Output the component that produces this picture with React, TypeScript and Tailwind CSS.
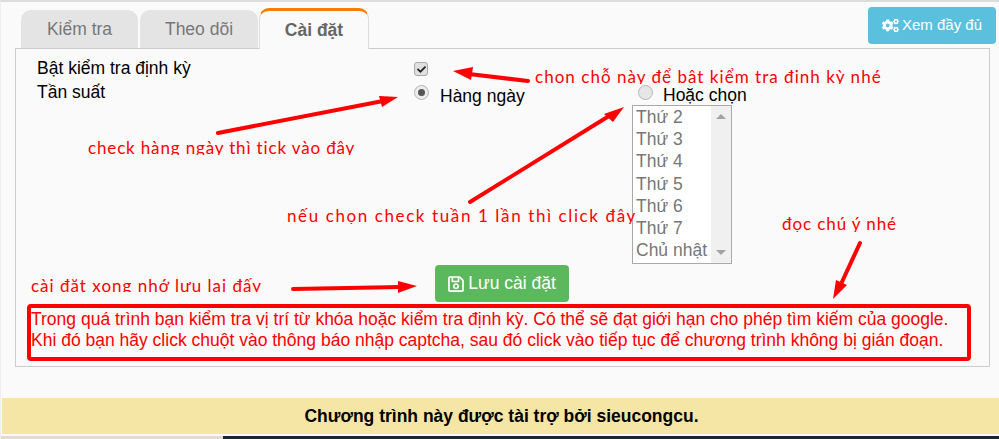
import { FaCheck, FaCogs, FaRegSave } from "react-icons/fa";

const days = ["Thứ 2", "Thứ 3", "Thứ 4", "Thứ 5", "Thứ 6", "Thứ 7", "Chủ nhật"];

function Arrows() {
  return (
    <svg className="absolute left-0 top-0" width="999" height="439" fill="#ff0000" stroke="none">
      <g stroke="#ff0000" strokeWidth="4" strokeLinecap="round">
        <line x1="527" y1="79" x2="468" y2="72" />
        <line x1="217" y1="131" x2="382" y2="99" />
        <line x1="469" y1="200" x2="608" y2="114" />
        <line x1="292" y1="287" x2="400" y2="285" />
        <line x1="859" y1="241" x2="840" y2="282" />
      </g>
      <polygon points="452,69 472,65 470,78" />
      <polygon points="397,95 378,94 381,105" />
      <polygon points="623,105 603,112 612,120" />
      <polygon points="416,284 397,279 397,291" />
      <polygon points="832,297 835,278 846,283" />
    </svg>
  );
}

function Notes() {
  const note = "absolute overflow-hidden whitespace-nowrap font-['Lato',sans-serif] text-[17px] leading-[20px] text-[#ff0000]";
  return (
    <>
      <div className={`${note} left-[534px] top-[65px] h-[17px] tracking-[1.03px]`}>chọn chỗ này để bật kiểm tra định kỳ nhé</div>
      <div className={`${note} left-[87px] top-[136px] h-[17px] tracking-[0.85px]`}>check hàng ngày thì tick vào đây</div>
      <div className={`${note} left-[286px] top-[204px] h-[18px] tracking-[1.6px]`}>nếu chọn check tuần 1 lần thì click đây</div>
      <div className={`${note} left-[30px] top-[274px] h-[16px] tracking-[1px]`}>cài đặt xong nhớ lưu lại đấy</div>
      <div className={`${note} left-[781px] top-[212px] h-[18px] tracking-[0.9px]`}>đọc chú ý nhé</div>
    </>
  );
}

export default function App() {
  return (
    <div className="relative flex h-[439px] w-[999px] flex-col overflow-hidden border-l border-t-2 border-l-[#eeeeee] border-t-[#dcdcdc] bg-[#fafafa] font-['Liberation_Sans',Arial,sans-serif] text-[17.5px] text-black">
      <div className="flex h-[46px] items-end justify-between pl-[20px] pr-[3px]">
        <div className="flex items-end gap-[2px]">
          <div className="flex h-[38px] w-[117px] items-center justify-center rounded-t-[10px] bg-[#e4e4e4] text-[#777]">Kiểm tra</div>
          <div className="flex h-[38px] w-[118px] items-center justify-center rounded-t-[10px] bg-[#e4e4e4] text-[#777]">Theo dõi</div>
          <div className="relative top-px -ml-px flex h-[41px] w-[110px] items-center justify-center rounded-t-[10px] border-x border-t-[3px] border-x-[#ddd] border-t-[#ff7b00] bg-[#fafafa] font-bold text-[#666]">Cài đặt</div>
        </div>
        <div className="mb-[4px] flex h-[37px] w-[128px] items-center justify-center gap-[3px] rounded bg-[#5bc0de] text-[15px] text-white">
          <FaCogs className="text-[17px]" />
          Xem đầy đủ
        </div>
      </div>

      <div className="ml-[14px] flex h-[319px] w-[975px] flex-col border border-[#cccccc]">
        <div className="flex h-[216px] shrink-0 pl-[21px] pt-[8px]">
          <div className="-mt-px flex w-[377px] flex-col leading-[24px]">
            <div>Bật kiểm tra định kỳ</div>
            <div>Tần suất</div>
          </div>
          <div className="flex flex-col">
            <div className="flex h-[24px] items-center">
              <span className="flex h-[14px] w-[14px] items-center justify-center rounded-[3px] border border-[#a9a9a9] bg-[#e0e0e0]">
                <FaCheck className="text-[9px] text-[#222]" />
              </span>
            </div>
            <div className="flex">
              <div className="flex w-[218px] items-start gap-[11px]">
                <span className="mt-[4px] flex h-[15px] w-[15px] items-center justify-center rounded-full border border-[#b5b5b5] bg-[#ececec]">
                  <span className="h-[7px] w-[7px] rounded-full bg-[#555]" />
                </span>
                <span className="mt-[5px] leading-[20px]">Hàng ngày</span>
              </div>
              <div className="flex flex-col">
                <div className="flex h-[24px] items-start gap-[10px] pl-[6px]">
                  <span className="mt-[4px] h-[15px] w-[15px] rounded-full border border-[#b5b5b5] bg-[#e6e6e6]" />
                  <span className="mt-[4px] leading-[20px]">Hoặc chọn</span>
                </div>
                <div className="flex h-[159px] w-[100px] border border-[#a9a9a9] bg-white">
                  <div className="flex-1 pl-[3px] leading-[22.17px] text-[#777]">
                    {days.map((d) => (
                      <div key={d} className="whitespace-nowrap">{d}</div>
                    ))}
                  </div>
                  <div className="flex w-[20px] flex-col items-center justify-between bg-[#f0f0f0] py-[8px]">
                    <span className="h-0 w-0 border-x-[5px] border-b-[5px] border-x-transparent border-b-[#a3a3a3]" />
                    <span className="h-0 w-0 border-x-[5px] border-t-[5px] border-x-transparent border-t-[#a3a3a3]" />
                  </div>
                </div>
              </div>
            </div>
          </div>
        </div>

        <div className="flex justify-center pr-[2px]">
          <div className="flex h-[37px] w-[134px] items-center justify-center gap-[3px] rounded bg-[#5cb85c] text-white">
            <FaRegSave className="text-[18px]" />
            Lưu cài đặt
          </div>
        </div>

        <div className="ml-[11px] mt-[2px] h-[57px] w-[944px] rounded-sm border-[4px] border-[#ff0000] pt-px leading-[21px] text-[#ff0000]">
          <div className="whitespace-nowrap">Trong quá trình bạn kiểm tra vị trí từ khóa hoặc kiểm tra định kỳ. Có thể sẽ đạt giới hạn cho phép tìm kiếm của google.</div>
          <div className="whitespace-nowrap">Khi đó bạn hãy click chuột vào thông báo nhập captcha, sau đó click vào tiếp tục để chương trình không bị gián đoạn.</div>
        </div>
      </div>

      <div className="ml-[1px] mt-[31px] flex h-[36px] items-center justify-center bg-[#f5e6a6] pl-[2px] font-bold">
        Chương trình này được tài trợ bởi sieucongcu.
      </div>
      <div className="mt-[2px] flex h-[3px] bg-[#1c2538]">
        <div className="w-[222px] bg-[#e6d8d8]" />
      </div>

      <Notes />
      <Arrows />
    </div>
  );
}
